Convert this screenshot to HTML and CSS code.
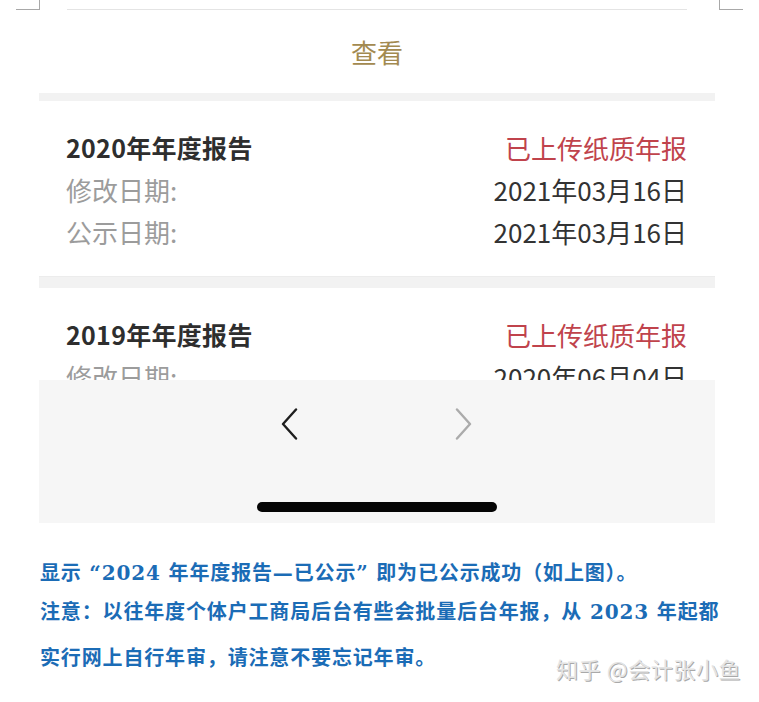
FILE: index.html
```html
<!DOCTYPE html>
<html lang="zh-CN">
<head>
<meta charset="utf-8">
<title>查看</title>
<link rel="stylesheet" href="styles.css">
</head>
<body>
<div class="page">
  <span class="crop crop-left"></span>
  <span class="crop crop-right"></span>

  <div class="phone">
    <div class="screen">
      <div class="header">
        <div class="topline"></div>
        <div class="view-title">查看</div>
      </div>
      <div class="band band-top"></div>

      <div class="card">
        <div class="row">
          <span class="title">2020年年度报告</span>
          <span class="status">已上传纸质年报</span>
        </div>
        <div class="row">
          <span class="label">修改日期:</span>
          <span class="value">2021年03月16日</span>
        </div>
        <div class="row">
          <span class="label">公示日期:</span>
          <span class="value">2021年03月16日</span>
        </div>
      </div>
      <div class="band band-mid"></div>

      <div class="card">
        <div class="row">
          <span class="title">2019年年度报告</span>
          <span class="status">已上传纸质年报</span>
        </div>
        <div class="row">
          <span class="label">修改日期:</span>
          <span class="value">2020年06月04日</span>
        </div>
        <div class="row">
          <span class="label">公示日期:</span>
          <span class="value">2020年06月04日</span>
        </div>
      </div>
    </div>

    <div class="toolbar">
      <div class="nav">
        <svg class="chev" width="20" height="32" viewBox="0 0 20 32"><path d="M16 1.5 L3 16 L16 30.5" fill="none" stroke="#1e1e1e" stroke-width="2.4" stroke-linecap="round" stroke-linejoin="round"/></svg>
        <svg class="chev" width="20" height="32" viewBox="0 0 20 32"><path d="M3 1.5 L16 16 L3 30.5" fill="none" stroke="#ababab" stroke-width="2.4" stroke-linecap="round" stroke-linejoin="round"/></svg>
      </div>
      <div class="homebar"></div>
    </div>
  </div>

  <div class="notes">
    <p class="note note-1">显示<span class="quote quote-open">“</span>2024 年年度报告—已公示<span class="quote quote-close">”</span>即为已公示成功（如上图）。</p>
    <p class="note note-2">注意：以往年度个体户工商局后台有些会批量后台年报，从 2023 年起都</p>
    <p class="note note-3">实行网上自行年审，请注意不要忘记年审。</p>
  </div>

  <div class="watermark">知乎 @会计张小鱼</div>
</div>
</body>
</html>
```

FILE: styles.css
```css
html, body {
  margin: 0;
  padding: 0;
  background: #ffffff;
}

body {
  font-family: "Noto Sans CJK SC", "Noto Sans", sans-serif;
}

.page {
  position: relative;
  width: 759px;
  height: 702px;
  overflow: hidden;
}

.crop {
  position: absolute;
  top: 0;
  width: 23px;
  height: 9px;
  border-bottom: 1px solid #a8a8a8;
}

.crop-left {
  left: 16px;
  border-right: 1px solid #a8a8a8;
}

.crop-right {
  left: 719px;
  border-left: 1px solid #a8a8a8;
}

.phone {
  margin-left: 39px;
  width: 676px;
}

.screen {
  height: 380px;
  overflow: hidden;
  background: #ffffff;
}

.header {
  height: 93px;
  display: flex;
  flex-direction: column;
}

.topline {
  margin: 0 28px;
  height: 9px;
  border-bottom: 1px solid #e4e4e4;
}

.view-title {
  flex: 1;
  display: flex;
  align-items: center;
  justify-content: center;
  font-size: 26px;
  color: #a38a50;
  padding-bottom: 1px;
}

.band {
  background: #f2f2f2;
}

.band-top {
  height: 8px;
}

.band-mid {
  height: 11px;
}

.card {
  padding: 25px 28px 24px 27px;
  border-bottom: 1px solid #ececec;
}

.row {
  display: flex;
  justify-content: space-between;
  align-items: center;
  height: 42px;
  font-size: 26px;
}

.title {
  font-weight: 700;
  color: #2e2e2e;
  font-size: 25px;
  letter-spacing: 0.3px;
}

.status {
  color: #c0434c;
}

.label {
  color: #9c9c9c;
}

.value {
  color: #333333;
}

.toolbar {
  height: 143px;
  background: #f6f6f6;
  display: flex;
  flex-direction: column;
  align-items: center;
}

.nav {
  display: flex;
  justify-content: center;
  gap: 154px;
  margin-top: 28px;
}

.chev {
  display: block;
}

.homebar {
  margin-top: 62px;
  width: 240px;
  height: 10px;
  border-radius: 5px;
  background: #050505;
}

.notes {
  padding-left: 40px;
  margin-top: 35px;
}

.note {
  margin: 0;
  font-size: 20px;
  line-height: 30px;
  font-weight: 700;
  letter-spacing: 0.85px;
  color: #1b6cb6;
  font-family: "DejaVu Serif", "Noto Sans CJK SC", serif;
  white-space: nowrap;
}

.quote {
  display: inline-block;
  width: 20px;
}

.quote-open {
  text-align: right;
}

.quote-close {
  text-align: left;
}

.note-2 {
  margin-top: 9px;
}

.note-3 {
  margin-top: 16px;
}

.watermark {
  position: absolute;
  left: 556px;
  top: 655px;
  font-size: 22px;
  line-height: 26px;
  letter-spacing: 0.6px;
  color: #e4e4e4;
  text-shadow: 1px 1px 0 #a9a9a9;
  white-space: nowrap;
}
```
